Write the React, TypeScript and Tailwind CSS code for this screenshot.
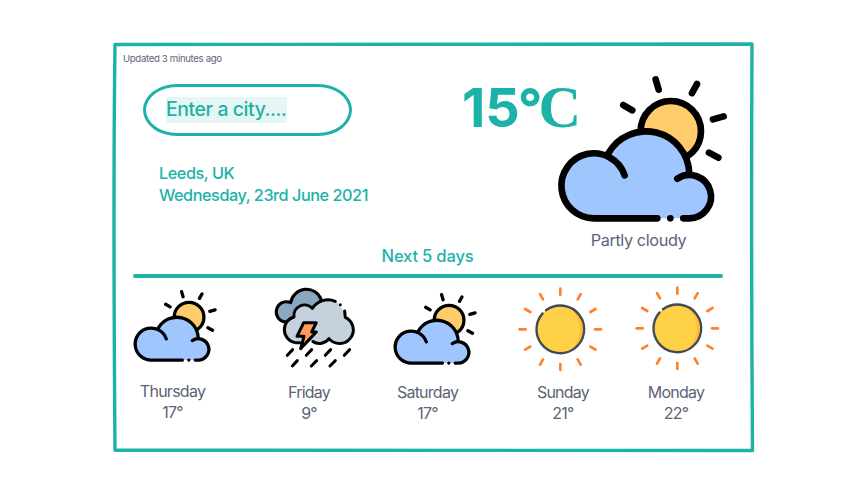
type IconProps = { className?: string };

function PartlyCloudy({ className }: IconProps) {
  return (
    <svg viewBox="30 27 520 450" className={className} fill="none" stroke="#000" strokeWidth={20} strokeLinecap="round" strokeLinejoin="round">
      <circle cx="377.5" cy="198.5" r="90.5" fill="#ffcc6b" />
      <path d="M332 43l9 31M456 57l-15 27M536 154l-32 9M492 263l28 15M235 120l27 16" />
      <path d="M147 460A97.5 97.5 0 1 1 190 275A130 130 0 0 1 433 330A65 65 0 0 1 433 460Z" fill="#a0c6ff" stroke="none" />
      <path d="M190 265A130 130 0 0 1 433 324" />
      <path d="M337 460H147A97.5 97.5 0 1 1 239 331" />
      <path d="M397 341A65 65 0 1 1 433 460H415" />
      <path d="M376 460h.1" />
    </svg>
  );
}

function Storm({ className }: IconProps) {
  return (
    <svg viewBox="25 20 250 250" className={className} fill="none" stroke="#000" strokeWidth={9} strokeLinecap="round" strokeLinejoin="round">
      <path d="M62 128A30.5 30.5 0 1 1 78 70A47.6 47.6 0 0 1 170 62L150 110L70 125Z" fill="#8aa7bd" />
      <path d="M92 190A39.5 39.5 0 0 1 88 113A32 32 0 0 1 143 87A56 56 0 0 1 212 66Q232 76 242 114A41.3 41.3 0 1 1 193 178A36 36 0 0 1 145 187Z" fill="#c5d2dd" stroke="none" />
      <path d="M105 190H92A39.5 39.5 0 0 1 88 113A32 32 0 0 1 143 87A56 56 0 0 1 212 66M240 95L242 114A41.3 41.3 0 1 1 193 178A36 36 0 0 1 145 187M227 76h.1" />
      <path d="M117 130H155L141 158H155L108 208L118 171H97Z" fill="#ff9b5e" />
      <path d="M84 211l-16 17M141 211l-16 17M198 211l-16 17M255 211l-16 17M98 244l-15 16M156 244l-16 16M212 244l-16 16" />
    </svg>
  );
}

const rayAngles = [0, 30, 60, 90, 120, 150, 180, 210, 240, 270, 300, 330];

function Sun({ className }: IconProps) {
  return (
    <svg viewBox="-130 -130 260 260" className={className} fill="none" strokeLinecap="round">
      <circle r="70" fill="#ffbc33" />
      <path d="M31 -63A70 70 0 1 0 31 63A86 86 0 0 0 31 -63Z" fill="#ffd146" />
      <circle r="71.5" stroke="#414b56" strokeWidth="7" pathLength="360" strokeDasharray="347 13" transform="rotate(233)" />
      {rayAngles.map((a) => (
        <path key={a} d="M0 -104V-122" stroke="#ff8229" strokeWidth="8" transform={`rotate(${a})`} />
      ))}
    </svg>
  );
}

const days = [
  { name: "Thursday", temp: "17°", Icon: PartlyCloudy, item: "ml-[13.5px]", icon: "ml-[4.5px] mt-[8.6px] w-[85.4px] h-[73.9px]", label: "" },
  { name: "Friday", temp: "9°", Icon: Storm, item: "ml-[46.5px]", icon: "ml-[9.3px] mt-[6.2px] w-[83.3px] h-[83.3px]", label: "pt-px" },
  { name: "Saturday", temp: "17°", Icon: PartlyCloudy, item: "ml-[28.5px]", icon: "ml-[9px] mt-[12.3px] w-[85.4px] h-[73.9px]", label: "pt-px" },
  { name: "Sunday", temp: "21°", Icon: Sun, item: "ml-[45.5px]", icon: "-ml-[1.5px] mt-[6px] w-[86.7px] h-[86.7px]", label: "pt-px" },
  { name: "Monday", temp: "22°", Icon: Sun, item: "ml-[23px]", icon: "ml-[2.5px] mt-[5px] w-[86.7px] h-[86.7px]", label: "pt-px" },
];

export default function App() {
  return (
    <main className="h-[493px] w-[848px] overflow-hidden bg-white pl-[114px] pt-[43px] font-['Inter',sans-serif] text-[#5c6378]">
      <section className="relative flex h-[408px] w-[639px] flex-col">
        <svg className="pointer-events-none absolute inset-0 overflow-visible" width="639" height="408" fill="none" stroke="#1cb2a8" strokeWidth="3.4" strokeLinejoin="round">
          <path d="M1 1.5Q320 .2 638 1Q637 200 638.5 407.5Q320 406.5 1 407.2Q-1 150 1 1.5Z" />
        </svg>
        <p className="ml-[9px] mt-[10px] h-3 text-[9.6px] leading-3 tracking-[-0.33px]">Updated 3 minutes ago</p>

        <div className="flex h-[180px] text-[#1cb2a8]">
          <div className="ml-[29px] w-[320px] shrink-0">
            <div className="mt-[19px] flex h-[52px] w-[209px] items-start rounded-[34px/26px] border-[3px] border-[#1cb2a8] pl-5 pt-[10px]">
              <span className="h-[26px] bg-[#e6f6f5] text-[19.4px] font-[450] leading-6 tracking-[-0.4px]">Enter a city....</span>
            </div>
            <p className="ml-4 mt-[26px] whitespace-nowrap text-[16.3px] font-[450] leading-[22px] tracking-[-0.48px]">
              Leeds, UK
              <br />
              Wednesday, 23rd June 2021
            </p>
          </div>
          <div className="flex w-[92px] shrink-0 items-baseline whitespace-nowrap text-[54px] font-bold leading-[85px]">
            <span className="-ml-px">15</span>
            <span className="-ml-0.5 tracking-[-4px]">°</span>
            <span className="font-['Liberation_Serif',serif] text-[59px]">C</span>
          </div>
          <div className="w-[174px] shrink-0 text-center text-[#5c6378]">
            <PartlyCloudy className="mt-[9px] h-[150px] w-[173.3px]" />
            <p className="mt-[5px] pr-[7px] text-[16.3px] leading-[22px] tracking-[-0.4px]">Partly cloudy</p>
          </div>
        </div>

        <h2 className="ml-[19px] h-[29px] w-[589px] text-center text-[16.6px] font-[450] leading-[22px] tracking-[-0.2px] text-[#1cb2a8]">Next 5 days</h2>
        <div className="ml-[18.5px] mt-[0.2px] h-[3.6px] w-[590px] rounded-full bg-[#1cb2a8]" />

        <div className="mt-[2.2px] flex">
          {days.map(({ name, temp, Icon, item, icon, label }) => (
            <div key={name} className={`w-[90px] shrink-0 ${item}`}>
              <div className="flow-root h-[101px]">
                <Icon className={`max-w-none ${icon}`} />
              </div>
              <p className={`text-center text-[16px] leading-[21px] tracking-[-0.75px] ${label}`}>
                {name}
                <br />
                {temp}
              </p>
            </div>
          ))}
        </div>
      </section>
    </main>
  );
}
